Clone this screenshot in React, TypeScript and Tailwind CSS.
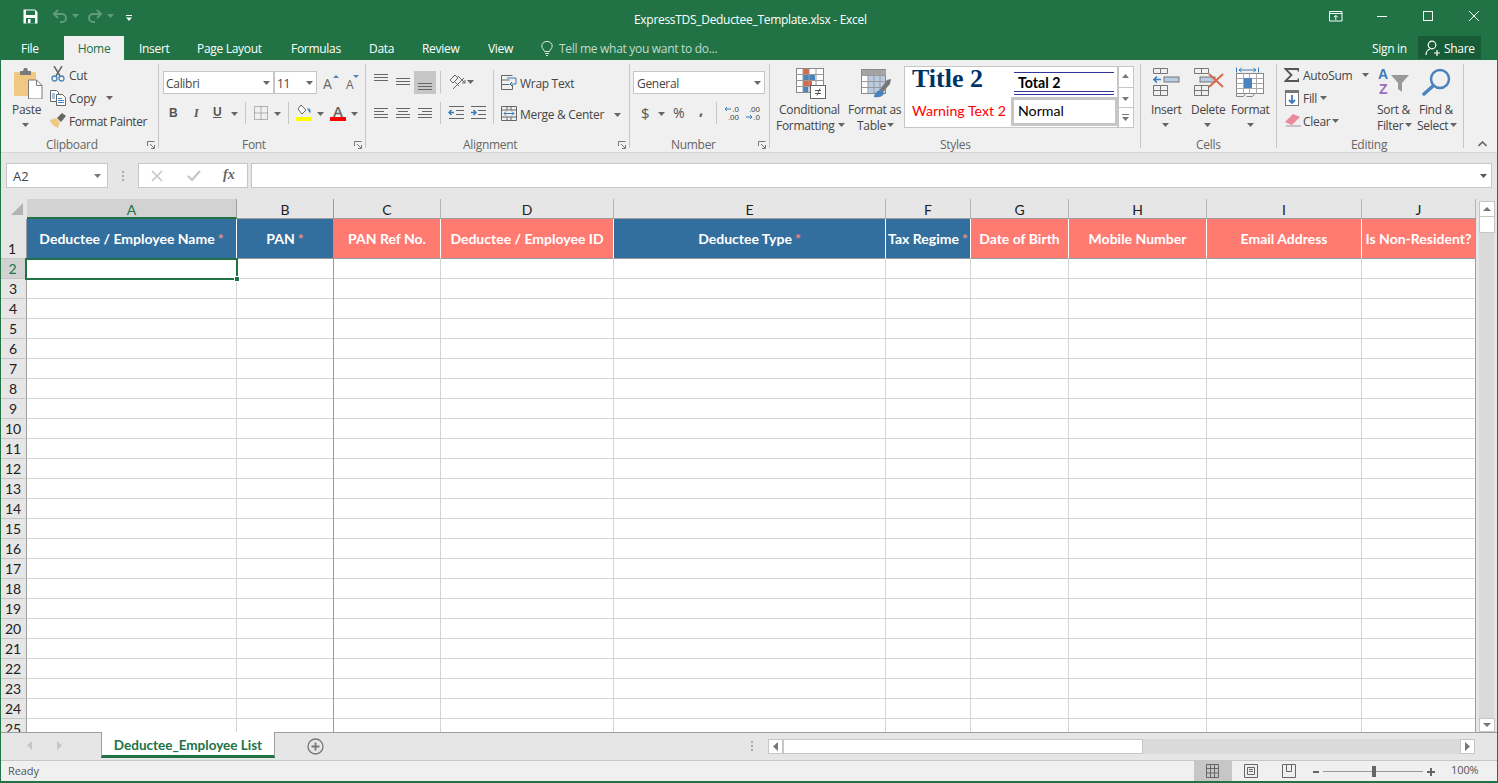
import React from "react";

const colWidths = [210, 97, 107, 173, 272, 85, 98, 138, 155, 114];
const letters = ["A", "B", "C", "D", "E", "F", "G", "H", "I", "J"];
const headers: { t: string; star?: boolean; blue: boolean }[] = [
  { t: "Deductee / Employee Name", star: true, blue: true },
  { t: "PAN", star: true, blue: true },
  { t: "PAN Ref No.", blue: false },
  { t: "Deductee / Employee ID", blue: false },
  { t: "Deductee Type", star: true, blue: true },
  { t: "Tax Regime", star: true, blue: true },
  { t: "Date of Birth", blue: false },
  { t: "Mobile Number", blue: false },
  { t: "Email Address", blue: false },
  { t: "Is Non-Resident?", blue: false },
];
const rows = Array.from({ length: 24 }, (_, i) => i + 2);

function T({ c, children }: { c: string; children: React.ReactNode }) {
  return <div className={"absolute whitespace-nowrap leading-[20px] " + c}>{children}</div>;
}

function Caret({ c, color = "#666" }: { c: string; color?: string }) {
  return (
    <svg className={"absolute " + c} width="7" height="4" viewBox="0 0 7 4">
      <path d="M0 0h7L3.5 4z" fill={color} />
    </svg>
  );
}

function Launcher({ c }: { c: string }) {
  return (
    <svg className={"absolute " + c} width="8" height="8" viewBox="0 0 8 8" fill="none" stroke="#777">
      <path d="M.5 5V.5H7.5" />
      <path d="M3 3l4 4M4 7.5h3.5V4" />
    </svg>
  );
}

function Sep({ c }: { c: string }) {
  return <div className={"absolute w-px bg-[#c6c6c6] " + c} />;
}

function Lines({ c, ys, xs }: { c: string; ys: number[]; xs: [number, number][] }) {
  return (
    <svg className={"absolute " + c} width="16" height="14" viewBox="0 0 16 14" stroke="#666">
      {ys.map((y, i) => (
        <path key={i} d={`M${xs[i][0]} ${y + 0.5}H${xs[i][1]}`} />
      ))}
    </svg>
  );
}

function TitleBar() {
  return (
    <div className="relative h-[36px] shrink-0 text-white">
      <svg className="absolute left-[23px] top-[9px]" width="15" height="15" viewBox="0 0 15 15" fill="none">
        <path d="M.5.5h11.5l2.5 2.5v11.5H.5z" fill="#fff" />
        <rect x="3" y="1.5" width="9" height="4.5" fill="#217346" />
        <rect x="3" y="9" width="9" height="5.5" fill="#217346" />
        <rect x="5" y="10" width="2.5" height="4" fill="#fff" />
      </svg>
      <svg className="absolute left-[52px] top-[9px]" width="16" height="15" viewBox="0 0 16 15" fill="none" stroke="#5f9c7c" strokeWidth="2">
        <path d="M6 1L2 5l4 4M2 5h8a4 4 0 0 1 4 4v0a4 4 0 0 1-4 4H8" />
      </svg>
      <Caret c="left-[72px] top-[14px]" color="#5f9c7c" />
      <svg className="absolute left-[87px] top-[9px]" width="16" height="15" viewBox="0 0 16 15" fill="none" stroke="#5f9c7c" strokeWidth="2">
        <path d="M10 1l4 4-4 4M14 5H6a4 4 0 0 0-4 4v0a4 4 0 0 0 4 4h2" />
      </svg>
      <Caret c="left-[107px] top-[14px]" color="#5f9c7c" />
      <svg className="absolute left-[126px] top-[15px]" width="6" height="6" viewBox="0 0 6 6" fill="#fff">
        <rect width="6" height="1" />
        <path d="M0 2.5h6L3 6z" />
      </svg>
      <T c="left-[634px] top-[10px] text-[12px] tracking-[-0.3px]">ExpressTDS_Deductee_Template.xlsx - Excel</T>
      <svg className="absolute left-[1329px] top-[11px]" width="14" height="11" viewBox="0 0 14 11" fill="none" stroke="#fff">
        <path d="M.5.5h12.5v9.500H.5zM.5 2.500h12.500M6.800 9V4.500M4.800 6.300l2-2 2 2" />
      </svg>
      <div className="absolute left-[1377px] top-[16px] w-[10px] h-px bg-white" />
      <div className="absolute left-[1423px] top-[11px] w-[10px] h-[10px] border border-white" />
      <svg className="absolute left-[1469px] top-[11px]" width="10" height="10" viewBox="0 0 10 10" stroke="#fff">
        <path d="M0 0l10 10M10 0L0 10" />
      </svg>
    </div>
  );
}

function TabsRow() {
  const tabs: [string, string][] = [
    ["File", "left-[21px]"],
    ["Insert", "left-[139px]"],
    ["Page Layout", "left-[197px]"],
    ["Formulas", "left-[291px]"],
    ["Data", "left-[369px]"],
    ["Review", "left-[422px]"],
    ["View", "left-[488px]"],
  ];
  return (
    <div className="relative h-[24px] shrink-0 text-white text-[12px] tracking-[-0.3px]">
      {tabs.map(([t, c]) => (
        <T key={t} c={c + " top-[3px]"}>{t}</T>
      ))}
      <div className="absolute left-[64px] top-0 w-[60px] h-[24px] bg-[#f0f0f0] text-[#217346] text-center leading-[26px]">Home</div>
      <svg className="absolute left-[541px] top-[5px]" width="12" height="15" viewBox="0 0 12 15" fill="none" stroke="#dbe8e0">
        <path d="M3.5 10.5C3 8.5.8 7.5.8 5a5.2 4.6 0 0 1 10.4 0c0 2.5-2.2 3.500-2.700 5.500zM4 12.500h4M5 14.500h2" />
      </svg>
      <T c="left-[559px] top-[3px] text-[#c4dacc]">Tell me what you want to do...</T>
      <T c="left-[1372px] top-[3px]">Sign in</T>
      <div className="absolute left-[1418px] top-0 w-[63px] h-[23px] bg-[#185c37]">
        <svg className="absolute left-[7px] top-[4px]" width="16" height="16" viewBox="0 0 16 16" fill="none" stroke="#fff" strokeWidth="1.200">
          <circle cx="7" cy="5" r="3.800" />
          <path d="M1 15c0-3 2-5.500 4-6M9 13h6M12 10v6" />
        </svg>
        <T c="left-[26px] top-[3px]">Share</T>
      </div>
    </div>
  );
}

function ClipboardGroup() {
  return (
    <>
      <svg className="absolute left-[14px] top-[8px]" width="29" height="31" viewBox="0 0 29 31">
        <rect x="0" y="4" width="22" height="24" rx="1" fill="#efc881" />
        <path d="M6 3h3l1-3h3l1 3h3v4H6z" fill="#7a7a7a" />
        <path d="M14.500 12h8l5.500 5.500V31h-13.500z" fill="#fff" stroke="#7a7a7a" />
        <path d="M22.500 12v5.500H28" fill="none" stroke="#7a7a7a" />
      </svg>
      <T c="left-[12px] top-[40px]">Paste</T>
      <Caret c="left-[22px] top-[63px]" />
      <svg className="absolute left-[51px] top-[6px]" width="15" height="16" viewBox="0 0 15 16" fill="none">
        <path d="M3 0l6 10M11 0L5 10" stroke="#666" strokeWidth="1.500" />
        <circle cx="3.500" cy="12.500" r="2.500" stroke="#4b84bd" strokeWidth="1.300" />
        <circle cx="10.500" cy="12.500" r="2.500" stroke="#4b84bd" strokeWidth="1.300" />
      </svg>
      <T c="left-[69px] top-[6px]">Cut</T>
      <svg className="absolute left-[50px] top-[30px]" width="16" height="16" viewBox="0 0 16 16" fill="none">
        <path d="M.5.500h6l2 2v9H.500z" fill="#fff" stroke="#666" />
        <path d="M6.500 4.500h6l3 3v8h-9z" fill="#fff" stroke="#666" />
        <path d="M8 8.500h4M8 10.500h6M8 12.500h6M2 4h3M2 6h3M2 8h3" stroke="#4b84bd" />
      </svg>
      <T c="left-[69px] top-[29px]">Copy</T>
      <Caret c="left-[106px] top-[36px]" />
      <svg className="absolute left-[50px] top-[53px]" width="16" height="15" viewBox="0 0 16 15">
        <path d="M0 7l6-2 4 4-2 6C5 14 1 11 0 7z" fill="#efc881" />
        <path d="M7 5l5-5 4 3-5 6z" fill="#666" />
      </svg>
      <T c="left-[69px] top-[52px] tracking-[-0.4px]">Format Painter</T>
      <T c="left-[46px] top-[75px] text-[#666]">Clipboard</T>
      <Launcher c="left-[147px] top-[81px]" />
      <Sep c="left-[158px] top-[4px] h-[84px]" />
    </>
  );
}

function FontGroup() {
  return (
    <>
      <div className="absolute left-[163px] top-[11px] w-[111px] h-[23px] bg-white border border-[#c6c6c6]" />
      <T c="left-[166px] top-[14px]">Calibri</T>
      <Caret c="left-[263px] top-[21px]" />
      <div className="absolute left-[274px] top-[11px] w-[43px] h-[23px] bg-white border border-[#c6c6c6]" />
      <T c="left-[277px] top-[14px]">11</T>
      <Caret c="left-[306px] top-[21px]" />
      <T c="left-[323px] top-[14px] text-[14px] text-[#666]">A</T>
      <div className="absolute left-[333px] top-[15px] w-0 h-0 border-x-[3px] border-b-[3px] border-x-transparent border-b-[#4b84bd]" />
      <T c="left-[346px] top-[15px] text-[12px] text-[#666]">A</T>
      <div className="absolute left-[353px] top-[15px] w-0 h-0 border-x-[3px] border-t-[3px] border-x-transparent border-t-[#4b84bd]" />
      <T c="left-[169px] top-[43px] font-bold text-[#555] [font-family:Liberation_Sans,sans-serif]">B</T>
      <T c="left-[194px] top-[43px] italic font-bold text-[#555] [font-family:Liberation_Serif,serif]">I</T>
      <T c="left-[213px] top-[42px] font-bold underline text-[#555] [font-family:Liberation_Sans,sans-serif]">U</T>
      <Caret c="left-[231px] top-[52px]" />
      <Sep c="left-[245px] top-[42px] h-[22px]" />
      <svg className="absolute left-[254px] top-[46px]" width="14" height="14" viewBox="0 0 14 14" stroke="#777" strokeDasharray="1 1" fill="none">
        <path d="M.5.500h13v13H.500zM.5 7h13M7 .5v13" />
      </svg>
      <Caret c="left-[274px] top-[52px]" />
      <Sep c="left-[288px] top-[42px] h-[22px]" />
      <svg className="absolute left-[296px] top-[44px]" width="17" height="17" viewBox="0 0 17 17" fill="none">
        <path d="M5 1l5 5-4 4-4-5z" stroke="#666" fill="#fff" />
        <path d="M11 4l3 1 1 4-2-1z" fill="#4b84bd" />
        <rect y="13" width="16" height="4" fill="#ffff00" />
      </svg>
      <Caret c="left-[317px] top-[52px]" />
      <T c="left-[333px] top-[41px] text-[15px] font-semibold text-[#666]">A</T>
      <div className="absolute left-[330px] top-[57px] w-[16px] h-[4px] bg-[#ff0000]" />
      <Caret c="left-[351px] top-[52px]" />
      <T c="left-[242px] top-[75px] text-[#666]">Font</T>
      <Launcher c="left-[354px] top-[81px]" />
      <Sep c="left-[365px] top-[4px] h-[84px]" />
    </>
  );
}

function AlignmentGroup() {
  return (
    <>
      <Lines c="left-[374px] top-[14px]" ys={[0, 3, 6]} xs={[[0, 14], [0, 14], [0, 14]]} />
      <Lines c="left-[396px] top-[18px]" ys={[0, 3, 6]} xs={[[0, 14], [0, 14], [0, 14]]} />
      <div className="absolute left-[414px] top-[11px] w-[22px] h-[23px] bg-[#c6c6c6]" />
      <Lines c="left-[418px] top-[23px]" ys={[0, 3, 6]} xs={[[0, 14], [0, 14], [0, 14]]} />
      <Sep c="left-[440px] top-[11px] h-[22px]" />
      <svg className="absolute left-[449px] top-[14px]" width="17" height="16" viewBox="0 0 17 16" fill="none" stroke="#666">
        <path d="M1 6l5-5 3 3-5 5zM6 8l4 4M9 2l7 7M13 9l3 0 0-3M4 15l11-11" />
      </svg>
      <Caret c="left-[467px] top-[20px]" />
      <Lines c="left-[374px] top-[48px]" ys={[0, 3, 6, 9]} xs={[[0, 14], [0, 10], [0, 14], [0, 14]]} />
      <Lines c="left-[396px] top-[48px]" ys={[0, 3, 6, 9]} xs={[[0, 14], [2, 12], [0, 14], [0, 14]]} />
      <Lines c="left-[418px] top-[48px]" ys={[0, 3, 6, 9]} xs={[[0, 14], [4, 14], [0, 14], [0, 14]]} />
      <Sep c="left-[440px] top-[42px] h-[22px]" />
      <svg className="absolute left-[448px] top-[46px]" width="17" height="14" viewBox="0 0 17 14" fill="none">
        <path d="M1 .5h15M8 4.500h8M8 8.500h8M1 12.500h15" stroke="#666" />
        <path d="M6 6.500H1M3.500 4L1 6.500 3.500 9" stroke="#3d7ab8" strokeWidth="1.500" />
      </svg>
      <svg className="absolute left-[470px] top-[46px]" width="17" height="14" viewBox="0 0 17 14" fill="none">
        <path d="M1 .5h15M8 4.500h8M8 8.500h8M1 12.500h15" stroke="#666" />
        <path d="M1 6.500h5M3.500 4L6 6.500 3.500 9" stroke="#3d7ab8" strokeWidth="1.500" />
      </svg>
      <Sep c="left-[493px] top-[10px] h-[54px]" />
      <svg className="absolute left-[501px] top-[15px]" width="16" height="15" viewBox="0 0 16 15" fill="none">
        <path d="M.5.5h11M.5.5v14h11M.5 5h8M.5 9.500h8M11.500 10v4.500" stroke="#666" />
        <path d="M6 3h9M15 3v6h-6M11 7L9 9l2 2" stroke="#3d7ab8" />
      </svg>
      <T c="left-[520px] top-[14px]">Wrap Text</T>
      <svg className="absolute left-[501px] top-[46px]" width="16" height="15" viewBox="0 0 16 15" fill="none">
        <path d="M.5.5h15v14H.5zM.5 4h15M.5 11h15M6 .5V4M10 .5V4M6 11v3.500M10 11v3.500" stroke="#666" />
        <path d="M3 7.500h10M5 5.500l-2 2 2 2M11 5.500l2 2-2 2" stroke="#3d7ab8" />
      </svg>
      <T c="left-[520px] top-[45px]">Merge &amp; Center</T>
      <Caret c="left-[614px] top-[53px]" />
      <T c="left-[463px] top-[75px] text-[#666]">Alignment</T>
      <Launcher c="left-[618px] top-[81px]" />
      <Sep c="left-[629px] top-[4px] h-[84px]" />
    </>
  );
}

function NumberGroup() {
  return (
    <>
      <div className="absolute left-[633px] top-[11px] w-[132px] h-[23px] bg-white border border-[#c6c6c6]" />
      <T c="left-[637px] top-[14px]">General</T>
      <Caret c="left-[754px] top-[21px]" />
      <T c="left-[641px] top-[43px] text-[15px] text-[#555]">$</T>
      <Caret c="left-[658px] top-[52px]" />
      <T c="left-[673px] top-[43px] text-[14px] text-[#555]">%</T>
      <T c="left-[699px] top-[39px] text-[15px] font-bold text-[#555]">,</T>
      <Sep c="left-[716px] top-[42px] h-[22px]" />
      <div className="absolute left-[725px] top-[46px] w-[14px] h-[15px] [font-family:Liberation_Sans,sans-serif] tracking-normal text-[8px] leading-[8px] text-[#444] text-right">
        <div>.0</div>
        <div>.00</div>
      </div>
      <svg className="absolute left-[724px] top-[46px]" width="7" height="6" viewBox="0 0 7 6" fill="none" stroke="#3d7ab8">
        <path d="M7 3H1M3 1L1 3l2 2" />
      </svg>
      <div className="absolute left-[746px] top-[46px] w-[14px] h-[15px] [font-family:Liberation_Sans,sans-serif] tracking-normal text-[8px] leading-[8px] text-[#444] text-right">
        <div>.00</div>
        <div>.0</div>
      </div>
      <svg className="absolute left-[746px] top-[54px]" width="7" height="6" viewBox="0 0 7 6" fill="none" stroke="#3d7ab8">
        <path d="M0 3h6M4 1l2 2-2 2" />
      </svg>
      <T c="left-[671px] top-[75px] text-[#666]">Number</T>
      <Launcher c="left-[758px] top-[81px]" />
      <Sep c="left-[769px] top-[4px] h-[84px]" />
    </>
  );
}

function StylesGroup() {
  return (
    <>
      <svg className="absolute left-[796px] top-[8px]" width="30" height="31" viewBox="0 0 30 31" fill="none">
        <rect x=".5" y=".5" width="27" height="24" fill="#fff" stroke="#888" />
        <rect x="7" y="1" width="6" height="5" fill="#d9694a" />
        <rect x="7" y="7" width="12" height="5" fill="#4b84bd" />
        <rect x="7" y="13" width="9" height="5" fill="#d9694a" />
        <rect x="7" y="19" width="5" height="5" fill="#4b84bd" />
        <path d="M7 .5v24M13 .5v24M20 .5v24M.5 6.500h27M.5 12.500h27M.5 18.500h27" stroke="#999" />
        <rect x="14.500" y="17.500" width="15" height="13" fill="#fff" stroke="#666" />
        <path d="M19 22.500h6M19 25.500h6M24 20.500l-3 7" stroke="#555" />
      </svg>
      <T c="left-[779px] top-[40px]">Conditional</T>
      <T c="left-[776px] top-[56px]">Formatting</T>
      <Caret c="left-[838px] top-[63px]" />
      <svg className="absolute left-[861px] top-[9px]" width="30" height="30" viewBox="0 0 30 30" fill="none">
        <rect x=".5" y=".5" width="24" height="24" fill="#fff" stroke="#888" />
        <rect x="1" y="1" width="24" height="5" fill="#a6a6a6" />
        <rect x="7" y="7" width="17" height="17" fill="#b8cce4" />
        <path d="M7 .5v24M13 .5v24M19 .5v24M.5 6.500h24M.5 12.500h24M.5 18.500h24" stroke="#999" />
        <path d="M18 22l8-11 4-1-1 5-8 9z" fill="#777" />
        <path d="M13 28c0-3 3-7 7-7l3 3c-1 4-6 5-10 4z" fill="#4b84bd" />
      </svg>
      <T c="left-[848px] top-[40px]">Format as</T>
      <T c="left-[857px] top-[56px]">Table</T>
      <Caret c="left-[887px] top-[63px]" />
      <div className="absolute left-[904px] top-[6px] w-[214px] h-[62px] bg-white border border-[#c6c6c6] overflow-hidden">
        <div className="absolute left-[7px] top-[-3px] [font-family:Liberation_Serif,serif] font-bold text-[26px] leading-[30px] tracking-normal text-[#003366] whitespace-nowrap">Title 2</div>
        <div className="absolute left-[7px] top-[35px] [font-family:Lato,sans-serif] tracking-normal text-[14.2px] leading-[18px] text-[#ff0000] whitespace-nowrap">Warning Text 2</div>
        <div className="absolute left-[109px] top-[5px] w-[100px] h-px bg-[#333399]" />
        <div className="absolute left-[113px] top-[7px] [font-family:Lato,sans-serif] tracking-normal font-bold text-[14.2px] leading-[18px] text-black whitespace-nowrap">Total 2</div>
        <div className="absolute left-[109px] top-[24px] w-[100px] h-[4px] border-y border-[#333399]" />
        <div className="absolute left-[106px] top-[30px] w-[107px] h-[29px] border-[3px] border-[#c6c6c6]" />
        <div className="absolute left-[113px] top-[35px] [font-family:Lato,sans-serif] tracking-normal text-[14.2px] leading-[18px] text-black whitespace-nowrap">Normal</div>
      </div>
      {["top-[6px] h-[22px]", "top-[27px] h-[21px]", "top-[47px] h-[21px]"].map((c, i) => (
        <div key={c} className={"absolute left-[1118px] w-[16px] bg-white border border-[#c6c6c6] " + c}>
          {i === 0 ? (
            <svg className="absolute left-[3px] top-[7px]" width="7" height="4" viewBox="0 0 7 4"><path d="M3.500 0L7 4H0z" fill="#777" /></svg>
          ) : (
            <svg className="absolute left-[3px] top-[6px]" width="7" height="8" viewBox="0 0 7 8" fill="#777">
              {i === 2 && <rect width="7" height="1" />}
              <path d="M0 3h7L3.500 7z" />
            </svg>
          )}
        </div>
      ))}
      <T c="left-[940px] top-[75px] text-[#666]">Styles</T>
      <Sep c="left-[1140px] top-[4px] h-[84px]" />
    </>
  );
}

function CellsGroup() {
  return (
    <>
      <svg className="absolute left-[1153px] top-[8px]" width="27" height="28" viewBox="0 0 27 28" fill="none">
        <path d="M.5.5h14v5H.5zM7.500.5v5M.5 17.500h14v10H.5zM.5 22.500h14M7.500 17.500v10" stroke="#777" />
        <rect x="11" y="9" width="15" height="5" fill="#b8cce4" stroke="#777" />
        <path d="M1 11.500h7M4 8.500l-3 3 3 3" stroke="#3d7ab8" strokeWidth="1.600" />
      </svg>
      <T c="left-[1151px] top-[40px]">Insert</T>
      <Caret c="left-[1162px] top-[63px]" />
      <svg className="absolute left-[1194px] top-[8px]" width="31" height="28" viewBox="0 0 31 28" fill="none">
        <path d="M.5.5h14v5H.5zM7.500.5v5M.5 17.500h14v10H.5zM.5 22.500h14M7.500 17.500v10" stroke="#777" />
        <rect x="6" y="9" width="15" height="5" fill="#b8cce4" stroke="#777" />
        <path d="M15 6l14 13M29 6L15 19" stroke="#d9694a" strokeWidth="2" />
      </svg>
      <T c="left-[1191px] top-[40px]">Delete</T>
      <Caret c="left-[1204px] top-[63px]" />
      <svg className="absolute left-[1236px] top-[7px]" width="28" height="31" viewBox="0 0 28 31" fill="none">
        <path d="M.5.500v5M22.500.5v5M3 3h17M5.500 1L3 3l2.500 2M17.500 1L20 3l-2.500 2" stroke="#3d7ab8" />
        <rect x=".5" y="6.500" width="27" height="20" fill="#fff" stroke="#888" />
        <path d="M7.500 6.500v20M13.500 6.500v20M20.500 6.500v20M.5 11.500h27M.5 16.500h27M.5 21.500h27" stroke="#aaa" />
        <rect x="8" y="11" width="8" height="10" fill="#4b84bd" />
        <path d="M.5 26.500v3h7l2-3M10.500 29.500h6l2-3" stroke="#888" />
      </svg>
      <T c="left-[1231px] top-[40px]">Format</T>
      <Caret c="left-[1247px] top-[63px]" />
      <T c="left-[1196px] top-[75px] text-[#666]">Cells</T>
      <Sep c="left-[1276px] top-[4px] h-[84px]" />
    </>
  );
}

function EditingGroup() {
  return (
    <>
      <svg className="absolute left-[1284px] top-[8px]" width="15" height="14" viewBox="0 0 15 14" fill="none">
        <path d="M14.500 3.500V1H1.500l6 6-6 6h13v-2.500" stroke="#555" strokeWidth="1.800" />
      </svg>
      <T c="left-[1303px] top-[6px]">AutoSum</T>
      <Caret c="left-[1362px] top-[13px]" />
      <svg className="absolute left-[1285px] top-[30px]" width="14" height="16" viewBox="0 0 14 16" fill="none">
        <rect x=".5" y=".5" width="13" height="15" fill="#fff" stroke="#777" />
        <rect x="1" y="1" width="12" height="2" fill="#777" />
        <path d="M7 5v8M4 10l3 3 3-3" stroke="#3d7ab8" strokeWidth="1.800" />
      </svg>
      <T c="left-[1303px] top-[29px]">Fill</T>
      <Caret c="left-[1320px] top-[36px]" />
      <svg className="absolute left-[1285px] top-[53px]" width="17" height="15" viewBox="0 0 17 15">
        <path d="M0 9l8-8 7 3-8 8z" fill="#ea8a9b" />
        <path d="M1 13h15" stroke="#999" />
      </svg>
      <T c="left-[1303px] top-[52px]">Clear</T>
      <Caret c="left-[1332px] top-[59px]" />
      <div className="absolute left-[1378px] top-[8px] [font-family:Liberation_Sans,sans-serif] font-bold text-[14px] leading-[13px] text-[#3d7ab8]">A</div>
      <div className="absolute left-[1379px] top-[22px] [font-family:Liberation_Sans,sans-serif] font-bold text-[14px] leading-[14px] text-[#9b6bbf]">Z</div>
      <svg className="absolute left-[1391px] top-[15px]" width="18" height="17" viewBox="0 0 18 17">
        <path d="M0 0h18l-7 8v9l-4-3V8z" fill="#999" />
      </svg>
      <T c="left-[1377px] top-[40px]">Sort &amp;</T>
      <T c="left-[1377px] top-[56px]">Filter</T>
      <Caret c="left-[1405px] top-[63px]" />
      <svg className="absolute left-[1422px] top-[8px]" width="29" height="28" viewBox="0 0 29 28" fill="none">
        <circle cx="18" cy="11" r="9" stroke="#4b84bd" strokeWidth="2.500" />
        <path d="M11 18L2 26" stroke="#4b84bd" strokeWidth="3.500" strokeLinecap="round" />
      </svg>
      <T c="left-[1419px] top-[40px]">Find &amp;</T>
      <T c="left-[1417px] top-[56px]">Select</T>
      <Caret c="left-[1450px] top-[63px]" />
      <T c="left-[1351px] top-[75px] text-[#666]">Editing</T>
      <Sep c="left-[1463px] top-[4px] h-[84px]" />
      <svg className="absolute left-[1478px] top-[81px]" width="9" height="6" viewBox="0 0 9 6" fill="none" stroke="#666" strokeWidth="1.600">
        <path d="M.5 5l4-4 4 4" />
      </svg>
    </>
  );
}

function Ribbon() {
  return (
    <div className="relative h-[92px] shrink-0 bg-[#f0f0f0] text-[#444] text-[12px] tracking-[-0.3px] border-b border-[#d4d4d4] box-content">
      <ClipboardGroup />
      <FontGroup />
      <AlignmentGroup />
      <NumberGroup />
      <StylesGroup />
      <CellsGroup />
      <EditingGroup />
    </div>
  );
}

function FormulaBar() {
  return (
    <div className="relative h-[46px] shrink-0 bg-[#e6e6e6] text-[#444]">
      <div className="absolute left-[6px] top-[10px] w-[102px] h-[25px] bg-white border border-[#c6c6c6] text-[13px] leading-[25px] pl-[6px]">A2</div>
      <Caret c="left-[94px] top-[21px]" color="#777" />
      <div className="absolute left-[122px] top-[18px] flex flex-col gap-[2px]">
        <div className="w-[2px] h-[2px] bg-[#aaa]" />
        <div className="w-[2px] h-[2px] bg-[#aaa]" />
        <div className="w-[2px] h-[2px] bg-[#aaa]" />
      </div>
      <div className="absolute left-[138px] top-[10px] w-[110px] h-[25px] bg-white border border-[#c6c6c6]" />
      <svg className="absolute left-[151px] top-[17px]" width="12" height="12" viewBox="0 0 12 12" stroke="#c6c6c6" strokeWidth="1.600">
        <path d="M1 1l10 10M11 1L1 11" />
      </svg>
      <svg className="absolute left-[187px] top-[17px]" width="14" height="12" viewBox="0 0 14 12" fill="none" stroke="#c6c6c6" strokeWidth="2.200">
        <path d="M1 6l4 4 8-9" />
      </svg>
      <div className="absolute left-[223px] top-[13px] [font-family:Liberation_Serif,serif] italic font-bold text-[14px] leading-[18px] text-[#666]">fx</div>
      <div className="absolute left-[251px] top-[10px] w-[1241px] h-[25px] bg-white border border-[#c6c6c6]" />
      <Caret c="left-[1480px] top-[21px]" color="#555" />
    </div>
  );
}

function Sheet() {
  return (
    <div className="relative h-[533px] shrink-0 bg-[#e6e6e6] overflow-hidden [font-family:Lato,sans-serif]">
      <svg className="absolute left-[11px] top-[4px]" width="12" height="12" viewBox="0 0 12 12">
        <path d="M12 0v12H0z" fill="#b4b4b4" />
      </svg>
      <div className="absolute left-0 top-0 w-[1476px] flex flex-col">
        <div className="flex h-[20px] pl-[27px]">
          {letters.map((l, i) => (
            <div
              key={l}
              style={{ width: colWidths[i] }}
              className={
                i === 0
                  ? "h-[20px] shrink-0 bg-[#d2d2d2] border-r border-r-[#9e9e9e] border-b-2 border-b-[#217346] text-[#217346] text-[14px] leading-[22px] text-center"
                  : "h-[20px] shrink-0 border-r border-r-[#b4b4b4] border-b border-b-[#9e9e9e] text-[#222] text-[14px] leading-[22px] text-center"
              }
            >
              {l}
            </div>
          ))}
        </div>
        <div className="flex h-[40px]">
          <div className="w-[27px] h-[40px] shrink-0 border-r border-r-[#9e9e9e] border-b border-b-[#c6c6c6] text-[#222] text-[14px] leading-[18px] flex items-end justify-center pr-[2px]">1</div>
          {headers.map((h, i) => (
            <div
              key={h.t}
              style={{ width: colWidths[i] }}
              className={
                (h.blue ? "bg-[#336f9e] " : "bg-[#ff7b72] ") +
                "h-[40px] shrink-0 border-r border-r-white border-b border-b-[#9b9b9b] text-white font-bold text-[14px] flex items-center justify-center whitespace-nowrap"
              }
            >
              {h.t}
              {h.star && <span className="ml-[3px] text-[#f08a84]">*</span>}
            </div>
          ))}
        </div>
        {rows.map((r) => (
          <div key={r} className="flex h-[20px]">
            <div
              className={
                r === 2
                  ? "w-[27px] h-[20px] shrink-0 bg-[#d2d2d2] border-r-2 border-r-[#217346] border-b border-b-[#c6c6c6] text-[#217346] text-[14px] leading-[20px] text-center"
                  : "w-[27px] h-[20px] shrink-0 border-r border-r-[#9e9e9e] border-b border-b-[#c6c6c6] text-[#222] text-[14px] leading-[20px] text-center"
              }
            >
              {r}
            </div>
            {colWidths.map((w, i) => (
              <div key={i} style={{ width: w }} className="h-[20px] shrink-0 bg-white border-r border-r-[#d4d4d4] border-b border-b-[#d4d4d4]" />
            ))}
          </div>
        ))}
      </div>
      <div className="absolute left-[333px] top-0 w-px h-[533px] bg-[#9b9b9b]" />
      <div className="absolute left-[1475px] top-[19px] w-px h-[514px] bg-[#9e9e9e]" />
      <div className="absolute left-[25px] top-[59px] w-[213px] h-[22px] border-2 border-[#217346]" />
      <div className="absolute left-[234px] top-[77px] w-[6px] h-[6px] bg-[#217346] border border-white" />
      <div className="absolute left-[1479px] top-[2px] w-[15px] h-[529px] bg-[#dadada]" />
      <div className="absolute left-[1479px] top-[2px] w-[16px] h-[16px] bg-white border border-[#c6c6c6]">
        <svg className="absolute left-[3px] top-[5px]" width="8" height="4" viewBox="0 0 8 4"><path d="M4 0l4 4H0z" fill="#777" /></svg>
      </div>
      <div className="absolute left-[1479px] top-[17px] w-[16px] h-[17px] bg-white border border-[#c6c6c6]" />
      <div className="absolute left-[1479px] top-[519px] w-[16px] h-[14px] bg-white border border-[#c6c6c6]">
        <svg className="absolute left-[3px] top-[4px]" width="8" height="4" viewBox="0 0 8 4"><path d="M0 0h8L4 4z" fill="#777" /></svg>
      </div>
    </div>
  );
}

function TabBar() {
  return (
    <div className="relative h-[29px] shrink-0 bg-[#e6e6e6] border-t border-[#9e9e9e] border-b border-b-[#c6c6c6]">
      <svg className="absolute left-[27px] top-[8px]" width="5" height="9" viewBox="0 0 5 9"><path d="M5 0v9L0 4.500z" fill="#c6c6c6" /></svg>
      <svg className="absolute left-[57px] top-[8px]" width="5" height="9" viewBox="0 0 5 9"><path d="M0 0v9l5-4.500z" fill="#c6c6c6" /></svg>
      <div className="absolute left-[101px] top-[-1px] w-[174px] h-[26px] bg-white border-x border-x-[#9e9e9e] border-b-[3px] border-b-[#217346] text-[#217346] [font-family:Lato,sans-serif] font-bold text-[13.5px] leading-[27px] text-center">
        Deductee_Employee List
      </div>
      <svg className="absolute left-[307px] top-[5px]" width="17" height="17" viewBox="0 0 17 17" fill="none" stroke="#777" strokeWidth="1.300">
        <circle cx="8.500" cy="8.500" r="7.500" />
        <path d="M8.500 4.500v8M4.500 8.500h8" strokeWidth="1.800" />
      </svg>
      <div className="absolute left-[751px] top-[8px] flex flex-col gap-[2px]">
        <div className="w-[2px] h-[2px] bg-[#aaa]" />
        <div className="w-[2px] h-[2px] bg-[#aaa]" />
        <div className="w-[2px] h-[2px] bg-[#aaa]" />
      </div>
      <div className="absolute left-[768px] top-[6px] w-[706px] h-[15px] bg-[#dadada]" />
      <div className="absolute left-[768px] top-[6px] w-[15px] h-[15px] bg-white border border-[#c6c6c6]">
        <svg className="absolute left-[4px] top-[2px]" width="5" height="9" viewBox="0 0 5 9"><path d="M5 0v9L0 4.500z" fill="#777" /></svg>
      </div>
      <div className="absolute left-[783px] top-[6px] w-[360px] h-[15px] bg-white border border-[#c6c6c6]" />
      <div className="absolute left-[1460px] top-[6px] w-[15px] h-[15px] bg-white border border-[#c6c6c6]">
        <svg className="absolute left-[4px] top-[2px]" width="5" height="9" viewBox="0 0 5 9"><path d="M0 0v9l5-4.500z" fill="#777" /></svg>
      </div>
    </div>
  );
}

function StatusBar() {
  return (
    <div className="relative h-[20px] shrink-0 bg-[#f0f0f0] text-[#555] text-[11px] tracking-[-0.1px]">
      <T c="left-[8px] top-0">Ready</T>
      <div className="absolute left-[1194px] top-0 w-[38px] h-[20px] bg-[#c6c6c6]" />
      <svg className="absolute left-[1206px] top-[3px]" width="13" height="14" viewBox="0 0 13 14" fill="none" stroke="#666">
        <path d="M.5.5h12v13H.5zM.5 4.500h12M.5 9h12M4.500.5v13M8.500.5v13" />
      </svg>
      <svg className="absolute left-[1244px] top-[3px]" width="14" height="14" viewBox="0 0 14 14" fill="none" stroke="#666">
        <path d="M.5.5h13v13H.5zM3.500 3.500h7v7h-7zM5 5.500h4M5 7.500h4" />
      </svg>
      <svg className="absolute left-[1282px] top-[3px]" width="14" height="14" viewBox="0 0 14 14" fill="none" stroke="#666">
        <path d="M.5.5h13v13H.5zM4.500.5v7h5V.5" />
      </svg>
      <div className="absolute left-[1313px] top-[10px] w-[6px] h-[2px] bg-[#666]" />
      <div className="absolute left-[1323px] top-[10px] w-[100px] h-px bg-[#999]" />
      <div className="absolute left-[1372px] top-[5px] w-[4px] h-[11px] bg-[#666]" />
      <div className="absolute left-[1427px] top-[10px] w-[8px] h-[2px] bg-[#666]" />
      <div className="absolute left-[1430px] top-[7px] w-[2px] h-[8px] bg-[#666]" />
      <T c="left-[1451px] top-[-1px]">100%</T>
    </div>
  );
}

export default function App() {
  return (
    <div className="relative w-[1498px] h-[783px] overflow-hidden flex flex-col bg-[#217346] [font-family:Open_Sans,sans-serif]">
      <TitleBar />
      <TabsRow />
      <Ribbon />
      <FormulaBar />
      <Sheet />
      <TabBar />
      <StatusBar />
      <div className="absolute left-0 top-[60px] w-px h-[723px] bg-[#217346]" />
      <div className="absolute right-0 top-[60px] w-px h-[723px] bg-[#217346]" />
    </div>
  );
}
